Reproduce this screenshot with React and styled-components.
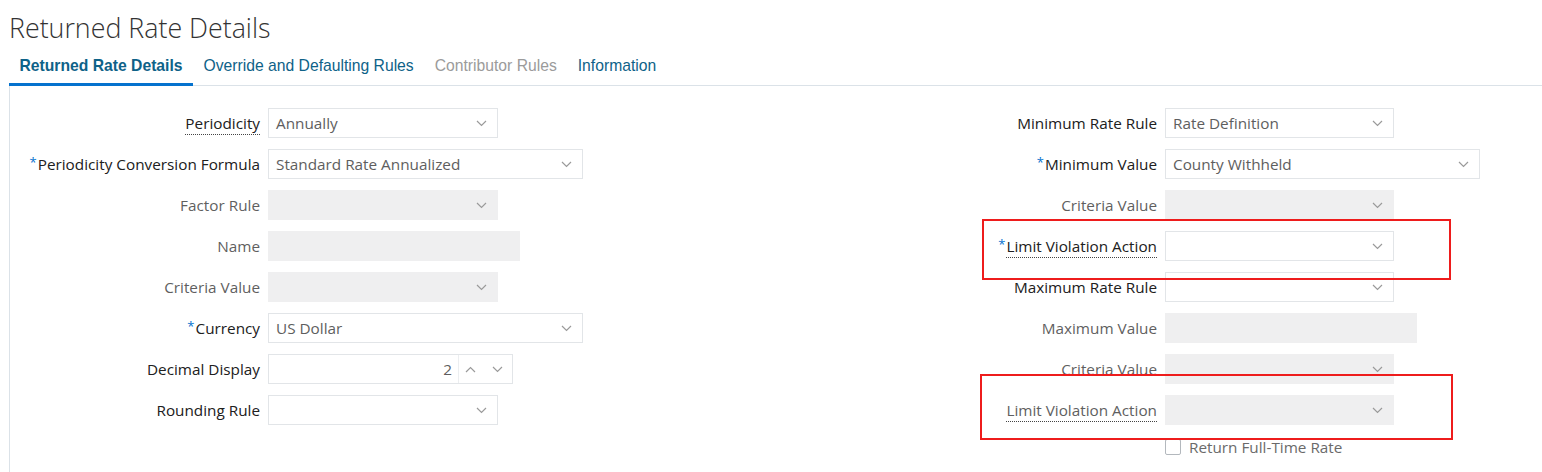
import React from 'react';
import styled, { createGlobalStyle } from 'styled-components';

const GlobalStyle = createGlobalStyle`
  body {
    margin: 0;
    background: #fff;
    font-family: "Open Sans", "Noto Sans", sans-serif;
  }
`;

const Page = styled.div`
  padding-left: 9px;
  height: 472px;
  overflow: hidden;
`;

const Title = styled.h1`
  margin: 0;
  height: 47px;
  padding-top: 11px;
  box-sizing: border-box;
  font-family: "Open Sans", sans-serif;
  font-weight: 300;
  font-size: 26.8px;
  line-height: 34px;
  color: #333;
`;

const TabBar = styled.div`
  display: flex;
  border-bottom: 1px solid #dbe2e8;
`;

const Tab = styled.div`
  padding: 1px 10.5px 0;
  height: 39px;
  box-sizing: border-box;
  line-height: 35px;
  font-family: "Liberation Sans", Arial, sans-serif;
  font-size: 15.7px;
  font-weight: ${(p) => (p.active ? 700 : 400)};
  color: ${(p) => (p.disabled ? '#9b9b9b' : '#0e6288')};
  border-bottom: 3px solid ${(p) => (p.active ? '#0572ce' : 'transparent')};
  margin-bottom: -1px;
`;

const Body = styled.div`
  position: relative;
  display: flex;
  border-left: 1px solid #dbe2e8;
  padding-top: 22px;
  height: 400px;
  box-sizing: border-box;
`;

const Column = styled.div`
  width: ${(p) => p.width}px;
  display: flex;
  flex-direction: column;
  gap: 11px;
`;

const Row = styled.div`
  display: grid;
  grid-template-columns: ${(p) => p.labelWidth}px auto;
  column-gap: 8px;
  align-items: center;
  height: 30px;
`;

const Label = styled.div`
  text-align: right;
  font-size: 15.3px;
  color: ${(p) => (p.muted ? '#5f5f5f' : '#202020')};
  white-space: nowrap;
`;

const LabelText = styled.span`
  border-bottom: ${(p) => (p.help ? '1px dotted #444' : 'none')};
  padding-bottom: 1px;
`;

const Star = styled.span`
  color: #0572ce;
  font-size: 13px;
  position: relative;
  top: -3px;
  margin-right: 1px;
`;

const Field = styled.div`
  width: ${(p) => p.width}px;
  height: 30px;
  box-sizing: border-box;
  display: flex;
  align-items: center;
  background: ${(p) => (p.disabled ? '#efeff0' : '#fff')};
  border: 1px solid ${(p) => (p.disabled ? '#efeff0' : '#e2e5e8')};
  padding: 0 10px 0 7px;
  font-size: 15.3px;
  color: #5e5e5e;
`;

const Value = styled.span`
  flex: 1;
  white-space: nowrap;
  text-align: ${(p) => (p.right ? 'right' : 'left')};
  padding-right: ${(p) => (p.right ? '6px' : '0')};
`;

const Spinner = styled.div`
  display: flex;
  align-items: center;
  gap: 16px;
  height: 100%;
  border-left: 1px solid #eceef0;
  padding-left: 6px;
  margin-right: -1px;
`;

const CheckRow = styled.div`
  display: flex;
  align-items: center;
  gap: 8px;
  margin-top: 1px;
  padding-left: ${(p) => p.indent}px;
  font-size: 15.3px;
  color: #6a6a6a;
`;

const Box = styled.span`
  width: 16px;
  height: 16px;
  box-sizing: border-box;
  border: 1px solid #b3b8bd;
  border-radius: 2px;
  background: #fff;
`;

const Highlight = styled.div`
  position: absolute;
  left: ${(p) => p.x}px;
  top: ${(p) => p.y}px;
  width: ${(p) => p.w}px;
  height: ${(p) => p.h}px;
  box-sizing: border-box;
  border: 2px solid #ee1c1c;
  pointer-events: none;
`;

const Chevron = ({ up }) => (
  <svg width="11" height="7" viewBox="0 0 11 7">
    <path
      d={up ? 'M1 6 L5.5 1.5 L10 6' : 'M1 1 L5.5 5.5 L10 1'}
      fill="none"
      stroke="#9a9a9a"
      strokeWidth="1.2"
    />
  </svg>
);

const Select = ({ width = 230, value, disabled }) => (
  <Field width={width} disabled={disabled}>
    <Value>{value}</Value>
    <Chevron />
  </Field>
);

const FormRow = ({ labelWidth, label, required, help, muted, children }) => (
  <Row labelWidth={labelWidth}>
    <Label muted={muted}>
      {required && <Star>*</Star>}
      <LabelText help={help}>{label}</LabelText>
    </Label>
    <div>{children}</div>
  </Row>
);

const App = () => {
  const L = 250;
  const R = 382;
  return (
    <Page>
      <GlobalStyle />
      <Title>Returned Rate Details</Title>
      <TabBar>
        <Tab active>Returned Rate Details</Tab>
        <Tab>Override and Defaulting Rules</Tab>
        <Tab disabled>Contributor Rules</Tab>
        <Tab>Information</Tab>
      </TabBar>
      <Body>
        <Column width={765}>
          <FormRow labelWidth={L} label="Periodicity" help>
            <Select value="Annually" />
          </FormRow>
          <FormRow labelWidth={L} label="Periodicity Conversion Formula" required>
            <Select width={315} value="Standard Rate Annualized" />
          </FormRow>
          <FormRow labelWidth={L} label="Factor Rule" muted>
            <Select disabled />
          </FormRow>
          <FormRow labelWidth={L} label="Name" muted>
            <Field width={252} disabled />
          </FormRow>
          <FormRow labelWidth={L} label="Criteria Value" muted>
            <Select disabled />
          </FormRow>
          <FormRow labelWidth={L} label="Currency" required>
            <Select width={315} value="US Dollar" />
          </FormRow>
          <FormRow labelWidth={L} label="Decimal Display">
            <Field width={245}>
              <Value right>2</Value>
              <Spinner>
                <Chevron up />
                <Chevron />
              </Spinner>
            </Field>
          </FormRow>
          <FormRow labelWidth={L} label="Rounding Rule">
            <Select />
          </FormRow>
        </Column>
        <Column width={766}>
          <FormRow labelWidth={R} label="Minimum Rate Rule">
            <Select width={229} value="Rate Definition" />
          </FormRow>
          <FormRow labelWidth={R} label="Minimum Value" required>
            <Select width={315} value="County Withheld" />
          </FormRow>
          <FormRow labelWidth={R} label="Criteria Value" muted>
            <Select width={229} disabled />
          </FormRow>
          <FormRow labelWidth={R} label="Limit Violation Action" required help>
            <Select width={229} />
          </FormRow>
          <FormRow labelWidth={R} label="Maximum Rate Rule">
            <Select width={229} />
          </FormRow>
          <FormRow labelWidth={R} label="Maximum Value" muted>
            <Field width={252} disabled />
          </FormRow>
          <FormRow labelWidth={R} label="Criteria Value" muted>
            <Select width={229} disabled />
          </FormRow>
          <FormRow labelWidth={R} label="Limit Violation Action" help muted>
            <Select width={229} disabled />
          </FormRow>
          <CheckRow indent={R + 8}>
            <Box />
            Return Full-Time Rate
          </CheckRow>
        </Column>
        <Highlight x={972} y={133} w={469} h={61} />
        <Highlight x={970} y={288} w={473} h={66} />
      </Body>
    </Page>
  );
};

export default App;
